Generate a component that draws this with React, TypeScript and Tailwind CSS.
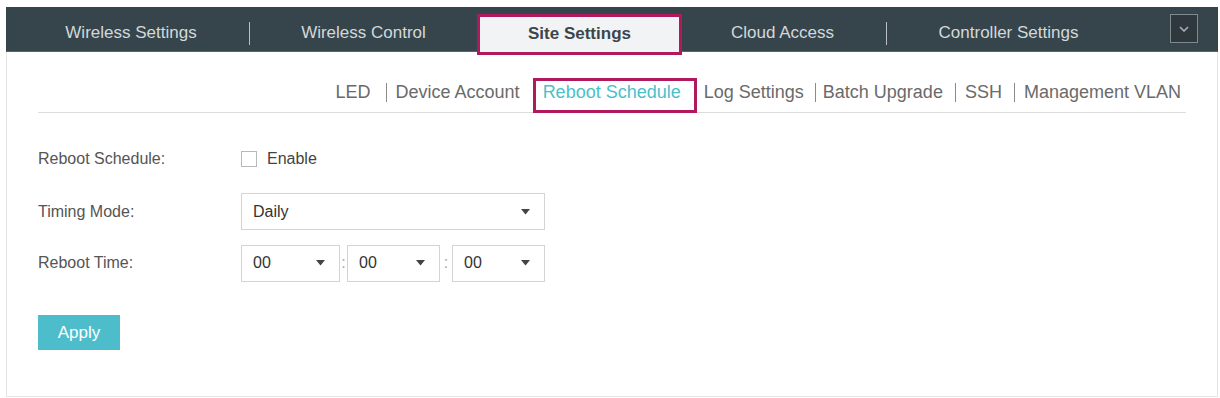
import React from "react";

const TOP_TABS = [
  { label: "Wireless Settings", width: "w-[244px]", sepAfter: true, pad: "pl-[7px]" },
  { label: "Wireless Control", width: "w-[227px]", sepAfter: false, pad: "" },
  { label: "Site Settings", width: "w-[205px]", sepAfter: false, active: true, pad: "" },
  { label: "Cloud Access", width: "w-[205px]", sepAfter: true, pad: "pr-[3px]" },
  { label: "Controller Settings", width: "w-[243px]", sepAfter: false, pad: "" },
];

// sub navigation items with their own paddings (left/right of text)
const SUB_TABS = [
  { label: "LED", pad: "pl-[7px] pr-[15px]" },
  { label: "Device Account", pad: "pl-[9px] pr-[13px]" },
  { label: "Reboot Schedule", pad: "" },
  { label: "Log Settings", pad: "pl-[7px] pr-[11px]" },
  { label: "Batch Upgrade", pad: "pl-[7px] pr-[12px]" },
  { label: "SSH", pad: "pl-[9px] pr-[12px]" },
  { label: "Management VLAN", pad: "pl-[9px] pr-[5px]" },
];
const ACTIVE_SUB = "Reboot Schedule";

function Caret() {
  return (
    <svg width="9" height="6" viewBox="0 0 9 6" className="shrink-0">
      <path d="M0 0 L9 0 L4.5 5.5 Z" fill="#444" />
    </svg>
  );
}

function Select({ value, className }: { value: string; className: string }) {
  return (
    <div
      className={`flex h-[37px] items-center justify-between border border-[#d4d4d4] bg-white pl-[11px] pr-[14px] text-[16px] text-[#333] ${className}`}
    >
      <span>{value}</span>
      <Caret />
    </div>
  );
}

export default function App() {
  return (
    <div
      className="min-h-[398px] bg-white pl-[6px] pr-[2px] pt-[7px]"
      style={{ fontFamily: '"Liberation Sans", Arial, sans-serif' }}
    >
      <div className="h-[390px] border-x border-b border-[#e4e4e4]">
        {/* top tab bar */}
        <div className="-mx-px flex h-[45px] items-start border-b border-[#56656b] bg-[#36454c] pt-[7px]">
          {TOP_TABS.map((t) =>
            t.active ? (
              <div
                key={t.label}
                className={`relative z-10 flex h-[41px] ${t.width} items-center justify-center border-[3px] border-[#b1195f] bg-[#f2f3f4] pb-[2px] text-[17px] font-bold text-[#3b464b]`}
              >
                {t.label}
              </div>
            ) : (
              <div key={t.label} className={`flex h-[38px] ${t.width} items-center`}>
                <div className={`flex-1 text-center text-[17px] text-[#d3d8da] ${t.pad}`}>
                  {t.label}
                </div>
                {t.sepAfter && <div className="h-[23px] w-px bg-[#b9c0c3]" />}
              </div>
            ),
          )}
          <div className="ml-[40px] flex h-[29px] w-[28px] items-center justify-center border border-[#7f8a8e] bg-[#2f383c]">
            <svg width="10" height="6" viewBox="0 0 10 6">
              <path d="M1 1 L5 5 L9 1" fill="none" stroke="#a7afb2" strokeWidth="1.6" />
            </svg>
          </div>
        </div>

        {/* sub navigation */}
        <div className="mx-[31px] mt-[26px]">
          <div className="flex h-[35px] items-center justify-end text-[18px] text-[#6a6a6a]">
            {SUB_TABS.map((s, i) => {
              const prev = SUB_TABS[i - 1];
              if (s.label === ACTIVE_SUB) {
                return (
                  <div
                    key={s.label}
                    className="relative z-10 flex h-[35px] items-center border-[3px] border-[#b1195f] bg-white pb-[7px] pl-[7px] pr-[13px] text-[#4bbfcb]"
                  >
                    {s.label}
                  </div>
                );
              }
              const showSep = i > 0 && prev.label !== ACTIVE_SUB;
              return (
                <div key={s.label} className="flex items-center pb-[7px]">
                  {showSep && <div className="h-[19px] w-px bg-[#8a8a8a]" />}
                  <span className={s.pad}>{s.label}</span>
                </div>
              );
            })}
          </div>
          <div className="-mt-px h-px bg-[#dcdcdc]" />
        </div>

        {/* form */}
        <div className="mt-[27px] px-[31px] text-[16px] text-[#555]">
          <div className="flex h-[37px] items-center">
            <div className="w-[203px]">Reboot Schedule:</div>
            <label className="flex items-center gap-[10px]">
              <span className="h-[16px] w-[16px] border border-[#b8b8b8] bg-white" />
              <span className="text-[#444]">Enable</span>
            </label>
          </div>

          <div className="mt-[16px] flex h-[37px] items-center">
            <div className="w-[203px]">Timing Mode:</div>
            <Select value="Daily" className="w-[304px]" />
          </div>

          <div className="mt-[14px] flex h-[38px] items-center">
            <div className="w-[203px]">Reboot Time:</div>
            <div className="flex items-center">
              <Select value="00" className="w-[99px]" />
              <span className="w-[7px] text-center text-[#aaa]">:</span>
              <Select value="00" className="w-[93px]" />
              <span className="w-[12px] text-center text-[#aaa]">:</span>
              <Select value="00" className="w-[93px]" />
            </div>
          </div>

          <button
            type="button"
            className="mt-[33px] h-[35px] w-[82px] bg-[#4dbdcb] text-[17px] text-white"
          >
            Apply
          </button>
        </div>
      </div>
    </div>
  );
}
